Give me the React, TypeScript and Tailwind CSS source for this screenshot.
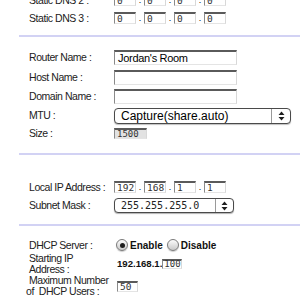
const inset =
  "border-t-2 border-l border-r border-b border-t-[#5a5a5a] border-l-[#8a8a8a] border-r-[#d8d8d8] border-b-[#e4e4e4]";

const Label = ({ children }: { children: React.ReactNode }) => (
  <div className="w-[85px] shrink-0 text-[10.5px] leading-[11px] tracking-[-0.45px] text-[#222]">{children}</div>
);

const Dot = () => <span className="w-[8px] text-center text-[9px] leading-none self-end pb-[1px]">.</span>;

const Octet = ({ value }: { value: string }) => (
  <div
    className={`${inset} w-[22px] h-[12px] bg-white pl-[2px] text-[9.5px] leading-[9px] text-[#333] [font-family:'DejaVu_Sans_Mono',monospace]`}
  >
    {value}
  </div>
);

const Quad = ({ values }: { values: string[] }) => (
  <div className="flex items-center">
    <Octet value={values[0]} />
    <Dot />
    <Octet value={values[1]} />
    <Dot />
    <Octet value={values[2]} />
    <Dot />
    <Octet value={values[3]} />
  </div>
);

const Arrows = () => (
  <svg width="7" height="10" viewBox="0 0 7 10">
    <path d="M3.5 0.5 L6.5 4 H0.5Z M3.5 9.5 L6.5 6 H0.5Z" fill="#1e1e1e" />
  </svg>
);

const Separator = ({ className }: { className: string }) => (
  <div className={`ml-[19px] h-[2px] bg-[#d2d2f4] ${className}`} />
);

const Radio = ({ checked }: { checked?: boolean }) => (
  <span className="w-[12px] h-[12px] rounded-full border border-[#7a7a7a] bg-linear-to-b from-[#fdfdfd] to-[#c9c9c9] flex items-center justify-center shadow-[0_1px_1px_rgba(0,0,0,0.2)]">
    {checked && <span className="w-[5px] h-[5px] rounded-full bg-[#1e1e1e]" />}
  </span>
);

export default function App() {
  return (
    <div className="w-[300px] h-[300px] overflow-hidden bg-white [font-family:'Liberation_Sans',Arial,sans-serif]">
      <div className="-mt-[9px]">
        <div className="pl-[29px]">
          <div className="flex items-center h-[18px]">
            <Label>Static DNS 2 :</Label>
            <Quad values={["0", "0", "0", "0"]} />
          </div>
          <div className="flex items-center h-[18px]">
            <Label>Static DNS 3 :</Label>
            <Quad values={["0", "0", "0", "0"]} />
          </div>
        </div>

        <Separator className="mt-[8px]" />

        <div className="pl-[29px] mt-[10px]">
          <div className="flex items-center h-[20px]">
            <Label>Router Name :</Label>
            <div className={`${inset} w-[123px] h-[15px] bg-white pl-[3px] text-[11px] leading-[12px] tracking-[-0.3px] text-black`}>
              Jordan's Room
            </div>
          </div>
          <div className="flex items-center h-[20px]">
            <Label>Host Name :</Label>
            <div className={`${inset} w-[123px] h-[15px] bg-white`} />
          </div>
          <div className="flex items-center h-[19px]">
            <Label>Domain Name :</Label>
            <div className={`${inset} w-[123px] h-[15px] bg-white`} />
          </div>
          <div className="flex items-center h-[19px]">
            <Label>MTU :</Label>
            <div className="w-[177px] h-[16px] flex items-stretch rounded-[4px] border border-[#4a4a4a] bg-white shadow-[0_1px_1px_rgba(0,0,0,0.25)]">
              <div className="flex-1 pl-[6px] text-[12px] leading-[14px] text-black">Capture(share.auto)</div>
              <div className="w-[19px] border-l border-[#9a9a9a] flex items-center justify-center">
                <Arrows />
              </div>
            </div>
          </div>
          <div className="flex items-center h-[17px]">
            <Label>Size :</Label>
            <div
              className={`${inset} w-[33px] h-[11px] bg-[#e2e2e2] pl-[2px] text-[9px] leading-[8px] text-[#333] [font-family:'DejaVu_Sans_Mono',monospace]`}
            >
              1500
            </div>
          </div>
        </div>

        <Separator className="mt-[11px]" />

        <div className="pl-[29px] mt-[23px]">
          <div className="flex items-center h-[18px]">
            <Label>Local IP Address :</Label>
            <Quad values={["192", "168", "1", "1"]} />
          </div>
          <div className="flex items-center h-[19px]">
            <Label>Subnet Mask :</Label>
            <div className="w-[120px] h-[15px] flex items-stretch rounded-[4px] border border-[#4a4a4a] bg-white shadow-[0_1px_1px_rgba(0,0,0,0.3)]">
              <div className="flex-1 pl-[6px] text-[10px] leading-[13px] text-[#222] [font-family:'DejaVu_Sans_Mono',monospace]">
                255.255.255.0
              </div>
              <div className="w-[18px] border-l border-[#9a9a9a] flex items-center justify-center">
                <Arrows />
              </div>
            </div>
          </div>
        </div>

        <Separator className="mt-[9px]" />

        <div className="pl-[29px] mt-[11px]">
          <div className="flex items-center h-[16px]">
            <Label>DHCP Server :</Label>
            <div className="ml-[2px] flex items-center text-[10px] font-bold text-[#111]">
              <Radio checked />
              <span className="ml-[2px]">Enable</span>
              <span className="ml-[4px]">
                <Radio />
              </span>
              <span className="ml-[2px]">Disable</span>
            </div>
          </div>
          <div className="flex items-center h-[22px]">
            <Label>
              Starting IP
              <br />
              Address :
            </Label>
            <div className="ml-[3px] flex items-end">
              <span className="text-[9.6px] font-bold text-[#111] leading-[10px]">192.168.1.</span>
              <div
                className={`${inset} w-[20px] h-[10px] bg-white pl-[1px] text-[9px] leading-[7px] text-[#333] [font-family:'DejaVu_Sans_Mono',monospace]`}
              >
                100
              </div>
            </div>
          </div>
          <div className="flex items-center h-[22px]">
            <Label>
              Maximum Number
              <br />
              <span className="-ml-[3px]">of&nbsp; DHCP Users :</span>
            </Label>
            <div className="ml-[3px]">
              <div
                className={`${inset} w-[21px] h-[11px] bg-white pl-[2px] text-[9.5px] leading-[8px] text-[#333] [font-family:'DejaVu_Sans_Mono',monospace]`}
              >
                50
              </div>
            </div>
          </div>
        </div>
      </div>
    </div>
  );
}
